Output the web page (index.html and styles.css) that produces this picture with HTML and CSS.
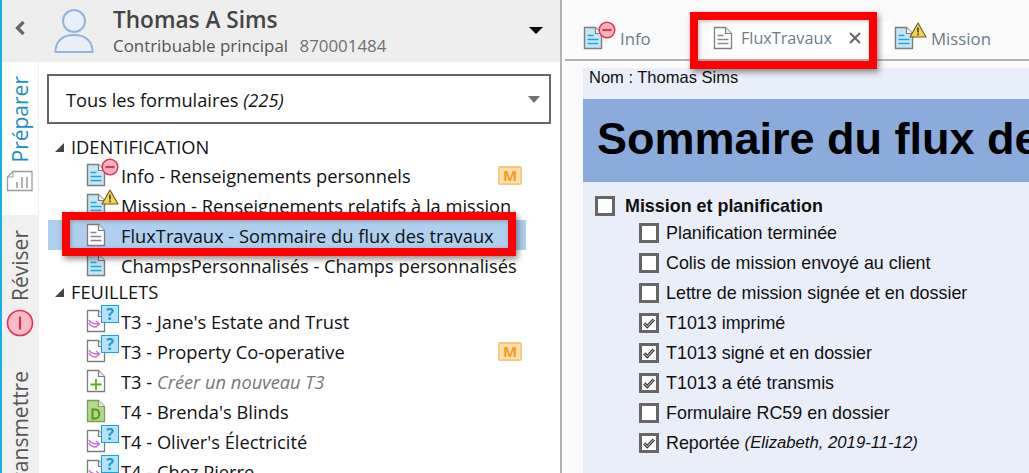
FILE: index.html
```html
<!DOCTYPE html>
<html lang="fr">
<head>
    <meta charset="UTF-8">
    <title>FluxTravaux - Thomas A Sims</title>
    <link rel="stylesheet" href="styles.css">
</head>
<body>

<svg class="defs" width="0" height="0">
    <symbol id="doc-blue" viewBox="0 0 20 24">
        <path d="M1.5 1.5h11l6 6v15h-17z" fill="#c6e6f5" stroke="#7d7d7d" stroke-width="1.4"/>
        <path d="M12.5 1.5v6h6" fill="#eef7fb" stroke="#7d7d7d" stroke-width="1.2"/>
        <path d="M4.5 9.5h6M4.5 13.5h11M4.5 17.5h11" stroke="#18a6e0" stroke-width="1.4"/>
    </symbol>
    <symbol id="doc-white" viewBox="0 0 20 24">
        <path d="M1.5 1.5h11l6 6v15h-17z" fill="#fff" stroke="#7d7d7d" stroke-width="1.3"/>
        <path d="M12.5 1.5v6h6" fill="#eee" stroke="#7d7d7d" stroke-width="1.2"/>
        <path d="M4.5 9.5h6M4.5 13.5h11M4.5 17.5h11" stroke="#8a8a8a" stroke-width="1.3"/>
    </symbol>
    <symbol id="doc-link" viewBox="0 0 20 24">
        <path d="M1.5 1.5h11l6 6v15h-17z" fill="#fff" stroke="#7d7d7d" stroke-width="1.3"/>
        <path d="M12.5 1.5v6h6" fill="#eee" stroke="#7d7d7d" stroke-width="1.2"/>
        <path d="M3 11c1 3 4 4 10 4M10 12l3.500 3-3.500 3M3 14c1 3 4 4 8 4" fill="none" stroke="#c76fd0" stroke-width="1.4"/>
    </symbol>
    <symbol id="doc-add" viewBox="0 0 20 24">
        <path d="M1.5 1.5h11l6 6v15h-17z" fill="#fff" stroke="#7d7d7d" stroke-width="1.3"/>
        <path d="M12.5 1.5v6h6" fill="#eee" stroke="#7d7d7d" stroke-width="1.2"/>
        <path d="M10 10v11M4.500 15.500h11" stroke="#5cae10" stroke-width="1.8"/>
    </symbol>
    <symbol id="doc-green" viewBox="0 0 20 24">
        <path d="M1.5 1.5h11l6 6v15h-17z" fill="#b5d88c" stroke="#7d9a62" stroke-width="1.3"/>
        <path d="M12.5 1.5v6h6" fill="#e6f2d8" stroke="#7d9a62" stroke-width="1.2"/>
        <path d="M6.500 10.500v9h3c5 0 5-9 0-9z" fill="none" stroke="#4f9a0c" stroke-width="2"/>
    </symbol>
    <symbol id="stop" viewBox="0 0 18 18">
        <circle cx="9" cy="9" r="7.800" fill="#f6b5c0" stroke="#e5304f" stroke-width="1.500"/>
        <path d="M4.500 9h9" stroke="#e5304f" stroke-width="2.200"/>
    </symbol>
    <symbol id="warn" viewBox="0 0 18 16">
        <path d="M9 1L17 15H1z" fill="#f7d24c" stroke="#6b5a1e" stroke-width="1.100" stroke-linejoin="round"/>
        <path d="M9 5.500v5M9 11.500v1.800" stroke="#333" stroke-width="1.500"/>
    </symbol>
    <symbol id="tick" viewBox="0 0 16 16">
        <path d="M2.500 8.500l3.500 3.500 7.500-8" fill="none" stroke="#333" stroke-width="3.600"/>
        <path d="M2.500 8.500l3.500 3.500 7.500-8" fill="none" stroke="#fff" stroke-width="1"/>
    </symbol>
</svg>

<div class="app">
    <nav class="rail">
        <button class="rail-back">
            <svg width="12" height="16" viewBox="0 0 12 16"><path d="M9.500 2L3.500 8l6 6" fill="none" stroke="#666" stroke-width="3.200"/></svg>
        </button>
        <div class="rail-tab active">
            <span class="rail-label">Préparer</span>
            <svg class="rail-icon" width="28" height="22" viewBox="0 0 28 22">
                <path d="M7 1.500h19v19H1.500V7z" fill="none" stroke="#9a9a9a" stroke-width="1.300"/>
                <path d="M7 1.500V7H1.500" fill="none" stroke="#9a9a9a" stroke-width="1"/>
                <path d="M11 12v6M16 7v11M21 7v11" stroke="#9a9a9a" stroke-width="1.500"/>
            </svg>
        </div>
        <div class="rail-tab review">
            <span class="rail-label">Réviser</span>
            <svg class="rail-icon" width="28" height="28" viewBox="0 0 28 28">
                <circle cx="14" cy="14" r="12.500" fill="#f8bcc6" stroke="#e5304f" stroke-width="1.600"/>
                <path d="M14 7.500v13" stroke="#d8304a" stroke-width="2.200"/>
            </svg>
        </div>
        <div class="rail-tab send">
            <span class="rail-label">Transmettre</span>
        </div>
    </nav>

    <aside class="sidebar">
        <header class="client">
            <svg class="avatar" width="40" height="48" viewBox="0 0 40 48">
                <circle cx="20" cy="13" r="11" fill="#e9eef8" stroke="#8fb4e0" stroke-width="2"/>
                <path d="M1.500 44c0-10 6-17 18.500-17s18.500 7 18.500 17z" fill="#e9eef8" stroke="#8fb4e0" stroke-width="2"/>
            </svg>
            <div class="client-text">
                <div class="client-name">Thomas A Sims</div>
                <div class="client-sub">Contribuable principal <span class="client-id">870001484</span></div>
            </div>
            <span class="arrow-black"></span>
        </header>

        <div class="form-select">
            <span>Tous les formulaires <em>(225)</em></span>
            <span class="arrow-grey"></span>
        </div>

        <div class="tree">
            <div class="group"><span class="caret"></span>IDENTIFICATION</div>
            <div class="row">
                <span class="ico"><svg class="doc"><use href="#doc-blue"/></svg><svg class="badge-stop"><use href="#stop"/></svg></span>
                <span>Info - Renseignements personnels</span>
                <span class="mark">M</span>
            </div>
            <div class="row">
                <span class="ico"><svg class="doc"><use href="#doc-blue"/></svg><svg class="badge-warn"><use href="#warn"/></svg></span>
                <span>Mission - Renseignements relatifs à la mission</span>
            </div>
            <div class="row selected">
                <span class="ico"><svg class="doc"><use href="#doc-white"/></svg></span>
                <span>FluxTravaux - Sommaire du flux des travaux</span>
            </div>
            <div class="row">
                <span class="ico"><svg class="doc"><use href="#doc-blue"/></svg></span>
                <span>ChampsPersonnalisés - Champs personnalisés</span>
            </div>
            <div class="group second"><span class="caret"></span>FEUILLETS</div>
            <div class="row">
                <span class="ico"><svg class="doc"><use href="#doc-link"/></svg><span class="badge-q">?</span></span>
                <span>T3 - Jane's Estate and Trust</span>
            </div>
            <div class="row">
                <span class="ico"><svg class="doc"><use href="#doc-link"/></svg><span class="badge-q">?</span></span>
                <span>T3 - Property Co-operative</span>
                <span class="mark">M</span>
            </div>
            <div class="row">
                <span class="ico"><svg class="doc"><use href="#doc-add"/></svg></span>
                <span>T3 - <em class="new">Créer un nouveau T3</em></span>
            </div>
            <div class="row">
                <span class="ico"><svg class="doc"><use href="#doc-green"/></svg></span>
                <span>T4 - Brenda's Blinds</span>
            </div>
            <div class="row">
                <span class="ico"><svg class="doc"><use href="#doc-link"/></svg><span class="badge-q">?</span></span>
                <span>T4 - Oliver's Électricité</span>
            </div>
            <div class="row">
                <span class="ico"><svg class="doc"><use href="#doc-link"/></svg><span class="badge-q">?</span></span>
                <span>T4 - Chez Pierre</span>
            </div>
        </div>
        <div class="callout callout-row"></div>
    </aside>

    <main class="content">
        <div class="tabs">
            <div class="tab tab-info">
                <span class="ico"><svg class="doc"><use href="#doc-blue"/></svg><svg class="badge-stop"><use href="#stop"/></svg></span>
                Info
            </div>
            <div class="tab tab-flux">
                <span class="ico"><svg class="doc"><use href="#doc-white"/></svg></span>
                FluxTravaux
                <svg class="tab-close" width="14" height="14" viewBox="0 0 14 14"><path d="M2 2l10 10M12 2L2 12" stroke="#666" stroke-width="2"/></svg>
            </div>
            <div class="tab tab-mission">
                <span class="ico"><svg class="doc"><use href="#doc-blue"/></svg><svg class="badge-warn"><use href="#warn"/></svg></span>
                Mission
            </div>
        </div>
        <div class="callout callout-tab"></div>

        <div class="sheet">
            <div class="sheet-name">Nom : Thomas Sims</div>
            <h1 class="sheet-title">Sommaire du flux des travaux</h1>
            <ul class="checks">
                <li class="main"><span class="box"></span><b>Mission et planification</b></li>
                <li><span class="box"></span>Planification terminée</li>
                <li><span class="box"></span>Colis de mission envoyé au client</li>
                <li><span class="box"></span>Lettre de mission signée et en dossier</li>
                <li><span class="box"><svg class="tick"><use href="#tick"/></svg></span>T1013 imprimé</li>
                <li><span class="box"><svg class="tick"><use href="#tick"/></svg></span>T1013 signé et en dossier</li>
                <li><span class="box"><svg class="tick"><use href="#tick"/></svg></span>T1013 a été transmis</li>
                <li><span class="box"></span>Formulaire RC59 en dossier</li>
                <li><span class="box"><svg class="tick"><use href="#tick"/></svg></span>Reportée&nbsp;<em>(Elizabeth, 2019-11-12)</em></li>
            </ul>
        </div>
    </main>
</div>

</body>
</html>
```

FILE: styles.css
```css
html, body {
    margin: 0;
    height: 473px;
    overflow: hidden;
    background-color: #ffffff;
}
.defs {
    position: absolute;
}
.app {
    display: flex;
    height: 473px;
    overflow: hidden;
    font-family: 'Open Sans', sans-serif;
    color: #111111;
}

/* left rail */
.rail {
    width: 36px;
    flex: none;
    border-left: 2px solid #14b1e7;
    background-color: #f0f0f0;
    display: flex;
    flex-direction: column;
    overflow: hidden;
}
.rail-back {
    height: 62px;
    flex: none;
    border: none;
    padding: 0 0 4px;
    background-color: #eeeeee;
}
.rail-tab {
    display: flex;
    flex-direction: column;
    align-items: center;
    flex: none;
}
.rail-tab.active {
    height: 153px;
    background-color: #ffffff;
    padding-top: 14px;
    box-sizing: border-box;
    color: #1b8fc4;
}
.rail-tab.review {
    height: 135px;
    padding-top: 15px;
    box-sizing: border-box;
    color: #555555;
}
.rail-tab.send {
    padding-top: 21px;
    color: #555555;
}
.rail-label {
    writing-mode: vertical-rl;
    transform: rotate(180deg);
    font-size: 21px;
    line-height: 24px;
}
.rail-icon {
    margin-top: 8px;
}

/* client and form list */
.sidebar {
    position: relative;
    width: 524px;
    flex: none;
    box-sizing: border-box;
    border-left: 1px solid #f0f0f0;
    border-right: 2px solid #b2b2b2;
}
.client {
    height: 62px;
    background-color: #eeeeee;
    display: flex;
    align-items: center;
    padding: 0 17px 0 15px;
    box-sizing: border-box;
}
.avatar {
    flex: none;
    margin-right: 19px;
    margin-top: 1px;
}
.client-text {
    flex: 1;
}
.client-name {
    font-size: 22.6px;
    line-height: 29px;
    font-weight: 600;
    color: #444444;
}
.client-sub {
    font-size: 16.9px;
    line-height: 24px;
    color: #555555;
}
.client-id {
    color: #707070;
    margin-left: 7px;
}
.arrow-black {
    width: 0;
    height: 0;
    border-left: 7px solid transparent;
    border-right: 7px solid transparent;
    border-top: 7px solid #000000;
    margin-bottom: 2px;
}
.form-select {
    margin: 12px 9px 0 8px;
    height: 50px;
    border: 2px solid #666666;
    box-sizing: border-box;
    display: flex;
    align-items: center;
    justify-content: space-between;
    padding: 0 9px 0 17px;
    font-size: 18.25px;
}
.arrow-grey {
    width: 0;
    height: 0;
    border-left: 6px solid transparent;
    border-right: 6px solid transparent;
    border-top: 7px solid #707070;
}
.tree {
    padding-top: 10px;
    font-size: 18.3px;
}
.group {
    height: 26px;
    line-height: 26px;
    padding-left: 16px;
    display: flex;
    align-items: center;
}
.group.second {
    height: 24px;
    margin-bottom: 2px;
}
.caret {
    width: 0;
    height: 0;
    border-left: 9px solid transparent;
    border-bottom: 9px solid #444444;
    margin-right: 7px;
}
.row {
    height: 30px;
    display: flex;
    align-items: center;
    padding-left: 47px;
    position: relative;
}
.row.selected {
    background-color: #aed0ee;
    margin: 0 34px 0 9px;
    padding-left: 38px;
}
.ico {
    position: relative;
    width: 20px;
    height: 24px;
    flex: none;
    margin-right: 15px;
}
.doc {
    width: 20px;
    height: 24px;
    display: block;
}
.badge-stop {
    position: absolute;
    left: 15px;
    top: -5px;
    width: 18px;
    height: 18px;
}
.badge-warn {
    position: absolute;
    left: 15px;
    top: -4px;
    width: 18px;
    height: 16px;
}
.badge-q {
    position: absolute;
    left: 15px;
    top: -4px;
    width: 16px;
    height: 16px;
    border: 1px solid #14a3dc;
    background-color: #b5e2f8;
    color: #149bd6;
    font-size: 16px;
    line-height: 16px;
    font-weight: 700;
    text-align: center;
}
.mark {
    position: absolute;
    left: 459px;
    top: 6px;
    width: 20px;
    height: 15px;
    border: 2px solid #fbc878;
    border-radius: 2px;
    background-color: #fde0ac;
    color: #f79a1e;
    font-size: 15px;
    line-height: 15px;
    font-weight: 700;
    text-align: center;
}
.new {
    color: #777777;
}

/* red highlight boxes */
.callout {
    position: absolute;
    box-sizing: border-box;
    border: 8px solid #ff0000;
    box-shadow: 2px 3px 6px rgba(0, 0, 0, 0.45), inset 1px 1px 4px rgba(0, 0, 0, 0.25);
    pointer-events: none;
}
.callout-row {
    left: 23px;
    top: 212px;
    width: 454px;
    height: 44px;
}
.callout-tab {
    left: 128px;
    top: 12px;
    width: 187px;
    height: 57px;
}

/* right side */
.content {
    position: relative;
    flex: 1;
    min-width: 0;
    background-color: #fafafa;
}
.tabs {
    height: 59px;
    margin-left: 3px;
    border-bottom: 2px solid #b2b2b2;
    display: flex;
    align-items: flex-end;
    font-size: 16.8px;
    color: #6d7a88;
}
.tab {
    display: flex;
    align-items: center;
    height: 34px;
    margin-bottom: 4px;
}
.tab-info {
    margin-left: 18px;
    width: 127px;
}
.tab-info .ico {
    margin-right: 17px;
}
.tab-flux {
    width: 182px;
    padding-left: 3px;
    box-sizing: border-box;
    background-color: #ffffff;
    font-size: 16.2px;
}
.tab-flux .ico {
    margin-right: 8px;
}
.tab-close {
    margin-left: 16px;
}
.tab-mission {
    margin-left: 2px;
}
.tab-mission .ico {
    margin-right: 17px;
}
.sheet {
    margin: 7px 0 0 21px;
    height: 420px;
    background-color: #e9eef8;
    font-family: 'Liberation Sans', Arial, sans-serif;
    color: #111111;
    overflow: hidden;
}
.sheet-name {
    height: 31px;
    padding-left: 6px;
    font-size: 16.5px;
    line-height: 19px;
}
.sheet-title {
    margin: 0;
    height: 83px;
    padding-left: 14px;
    background-color: #8aabdb;
    color: #000000;
    font-size: 45px;
    line-height: 79px;
    font-weight: 700;
    white-space: nowrap;
}
.checks {
    list-style: none;
    margin: 0;
    padding: 12px 0 0 56px;
    font-size: 17.9px;
}
.checks li {
    height: 30px;
    display: flex;
    align-items: center;
}
.checks li.main {
    margin-left: -44px;
    height: 24px;
}
.checks em {
    font-size: 16.7px;
}
.box {
    width: 20px;
    height: 20px;
    box-sizing: border-box;
    border: 3px solid #666666;
    background-color: #ffffff;
    margin-right: 7px;
    flex: none;
}
.main .box {
    margin-right: 10px;
}
.tick {
    display: block;
    width: 14px;
    height: 14px;
}
```
